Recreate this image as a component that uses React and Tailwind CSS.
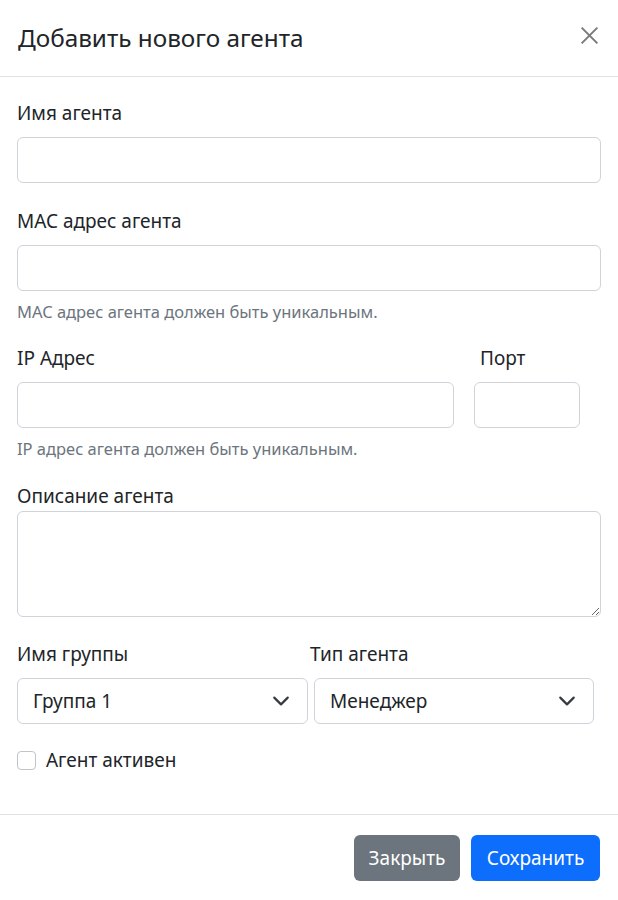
const font = { fontFamily: '"Noto Sans", "Liberation Sans", sans-serif' };

function Chevron() {
    return (
        <svg viewBox="0 0 16 16" className="w-[18px] h-[18px]" fill="none">
            <path d="m2 5 6 6 6-6" stroke="#343a40" strokeWidth="1.9" strokeLinecap="round" strokeLinejoin="round" />
        </svg>
    );
}

function Field({ label, children, tight, labelCls = "" }) {
    return (
        <div className="flex flex-col">
            <label className={`text-[19px] leading-[29px] text-[#212529] ${tight ? "" : "mb-[9px]"} ${labelCls}`}>{label}</label>
            {children}
        </div>
    );
}

const inputCls = "w-full h-[46px] rounded-[6px] border border-[#ced4da] bg-white outline-none";
const selectCls = "h-[46px] rounded-[6px] border border-[#ced4da] flex items-center justify-between pl-[15px] pr-[17px] text-[19px]";

export default function App() {
    return (
        <div className="w-[618px] h-[900px] bg-white text-[#212529] flex flex-col" style={font}>
            {/* Header */}
            <div className="h-[77px] flex items-center justify-between pl-[18px] pr-[18px] border-b border-[#dee2e6]">
                <h1 className="text-[24.3px] leading-[36px] font-normal">Добавить нового агента</h1>
                <button className="w-[22px] h-[22px] -mt-[5px] flex items-center justify-center">
                    <svg viewBox="0 0 16 16" className="w-[21px] h-[21px]" fill="none">
                        <path d="M2 2l12 12M14 2L2 14" stroke="#7a7a7a" strokeWidth="1.5" />
                    </svg>
                </button>
            </div>

            {/* Body */}
            <div className="flex-1 flex flex-col px-[17px] pt-[22px]">
                <Field label="Имя агента">
                    <input className={inputCls} />
                </Field>

                <div className="mt-[24px]">
                    <Field label="MAC адрес агента">
                        <input className={inputCls} />
                    </Field>
                    <p className="mt-[8px] text-[16.5px] leading-[25px] text-[#6c757d]">MAC адрес агента должен быть уникальным.</p>
                </div>

                <div className="mt-[20px]">
                    <div className="flex gap-[20px] pr-[21px]">
                        <div className="flex-1">
                            <Field label="IP Адрес">
                                <input className={inputCls} />
                            </Field>
                        </div>
                        <div className="w-[106px]">
                            <Field label="Порт" labelCls="pl-[6px]">
                                <input className={inputCls} />
                            </Field>
                        </div>
                    </div>
                    <p className="mt-[8px] text-[16.5px] leading-[25px] text-[#6c757d]">IP адрес агента должен быть уникальным.</p>
                </div>

                <div className="mt-[21px]">
                    <Field label="Описание агента" tight>
                        <textarea className="w-full h-[106px] rounded-[6px] border border-[#ced4da] bg-white outline-none resize-y" />
                    </Field>
                </div>

                <div className="mt-[23px] flex gap-[6px]">
                    <div className="w-[291px]">
                        <Field label="Имя группы">
                            <div className={selectCls}>
                                <span>Группа 1</span>
                                <Chevron />
                            </div>
                        </Field>
                    </div>
                    <div className="w-[280px]">
                        <Field label="Тип агента" labelCls="-ml-[4px]">
                            <div className={selectCls}>
                                <span>Менеджер</span>
                                <Chevron />
                            </div>
                        </Field>
                    </div>
                </div>

                <div className="mt-[22px] flex items-center gap-[10px] h-[29px]">
                    <span className="w-[19px] h-[19px] rounded-[4px] border border-[#bfc5cb] bg-white" />
                    <span className="text-[19px] leading-[29px]">Агент активен</span>
                </div>
            </div>

            {/* Footer */}
            <div className="h-[86px] border-t border-[#dee2e6] flex justify-end items-start gap-[11px] pt-[20px] pr-[18px]">
                <button className="h-[46px] w-[106px] rounded-[6px] bg-[#6c757d] text-white text-[19px]">Закрыть</button>
                <button className="h-[46px] w-[129px] rounded-[6px] bg-[#0d6efd] text-white text-[19px]">Сохранить</button>
            </div>
        </div>
    );
}
